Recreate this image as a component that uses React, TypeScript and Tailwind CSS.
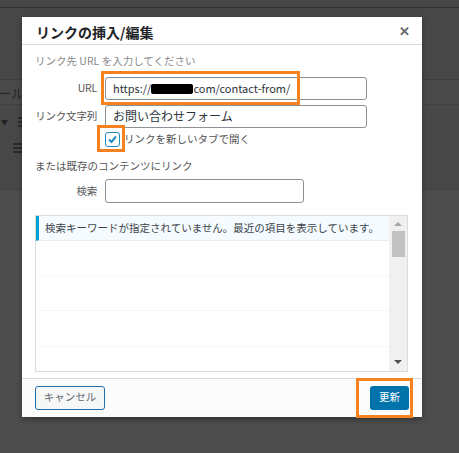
import React from 'react';

// --- background editor (dimmed behind the modal) ---
const EditorBackdrop = () => (
  <div className="flex flex-col w-full h-full bg-[#4c4c4c]">
    <div className="h-[8px] bg-[#474747] border-b border-[#2f2f2f]" />
    <div className="h-[72px] bg-[#474747] border-b border-[#3d3d3d]" />
    <div className="h-[25px] bg-[#4a4a4a] border-b border-[#404040] flex items-center">
      <span className="text-[13px] text-[#262626] leading-none -ml-[2px]">ール</span>
    </div>
    <div className="h-[85px] bg-[#484848] border-b border-[#404040] flex flex-col pl-[1px] pt-[12px] gap-[16px]">
      <div className="flex items-center gap-[10px]">
        <span className="text-[7px] text-[#222] leading-none">▼</span>
        <svg width="4" height="10" viewBox="0 0 4 10">
          <rect x="0" y="0" width="4" height="2" fill="#2b2b2b" />
          <rect x="0" y="4" width="4" height="2" fill="#2b2b2b" />
          <rect x="0" y="8" width="4" height="2" fill="#2b2b2b" />
        </svg>
      </div>
      <svg width="22" height="10" viewBox="0 0 22 10" className="ml-[12px]">
        <rect x="0" y="0" width="9" height="2" fill="#2b2b2b" />
        <rect x="0" y="4" width="9" height="2" fill="#2b2b2b" />
        <rect x="0" y="8" width="9" height="2" fill="#2b2b2b" />
      </svg>
    </div>
    <div className="flex-1 bg-[#4d4d4d]" />
  </div>
);

const Field = ({ label, children }: { label: string; children: React.ReactNode }) => (
  <div className="flex items-center">
    <label className="w-[62px] text-right text-[10.5px] text-[#555] leading-none whitespace-nowrap tracking-[-0.2px]">
      {label}
    </label>
    <div className="ml-[8px]">{children}</div>
  </div>
);

const inputCls =
  'h-[23px] border border-[#8c8f94] rounded-[3px] bg-white flex items-center px-[7px] text-[11px] text-[#2c3338] leading-none whitespace-nowrap';

const ResultsBox = () => (
  <div className="mt-[12px] w-[373px] h-[157px] border border-[#dcdcde] flex bg-white">
    <div className="flex-1 flex flex-col">
      <div className="h-[25px] bg-[#f5fbfe] border-l-[3px] border-[#00a0d2] border-b border-b-[#ececec] flex items-center pl-[6px] text-[10.5px] text-[#3c434a] leading-none whitespace-nowrap">
        検索キーワードが指定されていません。最近の項目を表示しています。
      </div>
      <div className="h-[35px] ml-[4px] border-b border-[#f7f7f7]" />
      <div className="h-[35px] ml-[4px] border-b border-[#f7f7f7]" />
      <div className="h-[36px] ml-[4px] border-b border-[#f7f7f7]" />
    </div>
    <div className="w-[18px] bg-[#f0f0f0] flex flex-col items-center">
      <span className="mt-[6px] w-0 h-0 border-x-[4px] border-x-transparent border-b-[4px] border-b-[#a3a3a3]" />
      <div className="mt-[5px] w-[13px] h-[26px] bg-[#c1c1c1]" />
      <div className="flex-1" />
      <span className="mb-[7px] w-0 h-0 border-x-[4px] border-x-transparent border-t-[4px] border-t-[#505050]" />
    </div>
  </div>
);

const LinkModal = () => (
  <div className="absolute left-[22px] top-[17px] w-[400px] h-[400px] bg-white shadow-[0_3px_6px_rgba(0,0,0,0.3)] flex flex-col">
    <div className="h-[28px] border-b border-[#dcdcde] flex items-center justify-between pl-[14px] pr-[12px]">
      <h1 className="text-[14px] font-bold text-[#1d2327] leading-none mt-[2px]">リンクの挿入/編集</h1>
      <span className="text-[13px] font-bold text-[#646970] leading-none">✕</span>
    </div>

    <div className="flex-1 flex flex-col pl-[13px]">
      <p className="mt-[11px] text-[10.5px] text-[#8a8a8a] leading-none">リンク先 URL を入力してください</p>

      <div className="mt-[10px] flex flex-col gap-[5px]">
        <Field label="URL">
          <div className={`${inputCls} w-[262px]`}>
            https://<span className="inline-block w-[42px] h-[10px] bg-black rounded-[2px] mt-[1px]" />com/contact-from/
          </div>
        </Field>
        <Field label="リンク文字列">
          <div className={`${inputCls} w-[262px] text-[12px]`}>お問い合わせフォーム</div>
        </Field>
      </div>

      <div className="mt-[4px] ml-[70px] flex items-center">
        <span className="w-[15px] h-[15px] border border-[#1e8cbe] rounded-[3px] flex items-center justify-center bg-white">
          <svg width="11" height="11" viewBox="0 0 11 11">
            <path d="M2 5.5 L4.5 8 L9 2.5" fill="none" stroke="#1e8cbe" strokeWidth="2" />
          </svg>
        </span>
        <span className="ml-[4px] text-[10.5px] text-[#555] leading-none">リンクを新しいタブで開く</span>
      </div>

      <p className="mt-[14px] text-[10.5px] text-[#555] leading-none">または既存のコンテンツにリンク</p>

      <div className="mt-[8px]">
        <Field label="検索">
          <div className={`${inputCls} w-[199px] h-[24px]`} />
        </Field>
      </div>

      <ResultsBox />
    </div>

    <div className="h-[39px] border-t border-[#dcdcde] bg-[#fcfcfc] flex items-center justify-between pl-[13px] pr-[13px] pb-[1px]">
      <button className="w-[70px] h-[24px] border border-[#2271b1] rounded-[3px] bg-[#f6f7f7] text-[10.5px] text-[#646970] leading-none">
        キャンセル
      </button>
      <button className="w-[39px] h-[24px] rounded-[3px] bg-[#0073aa] text-[10.5px] text-white leading-none">
        更新
      </button>
    </div>
  </div>
);

export default function App() {
  return (
    <div className="relative w-[459px] h-[453px] overflow-hidden font-['Noto_Sans_CJK_JP','Noto_Sans',sans-serif]">
      <EditorBackdrop />
      <LinkModal />
      {/* orange annotation boxes */}
      <div className="absolute left-[101px] top-[71px] w-[199px] h-[34px] border-[3px] border-[#f5821f]" />
      <div className="absolute left-[97px] top-[125px] w-[28px] h-[27px] border-[3px] border-[#f5821f]" />
      <div className="absolute left-[356px] top-[378px] w-[57px] h-[40px] border-[3px] border-[#f5821f]" />
    </div>
  );
}
